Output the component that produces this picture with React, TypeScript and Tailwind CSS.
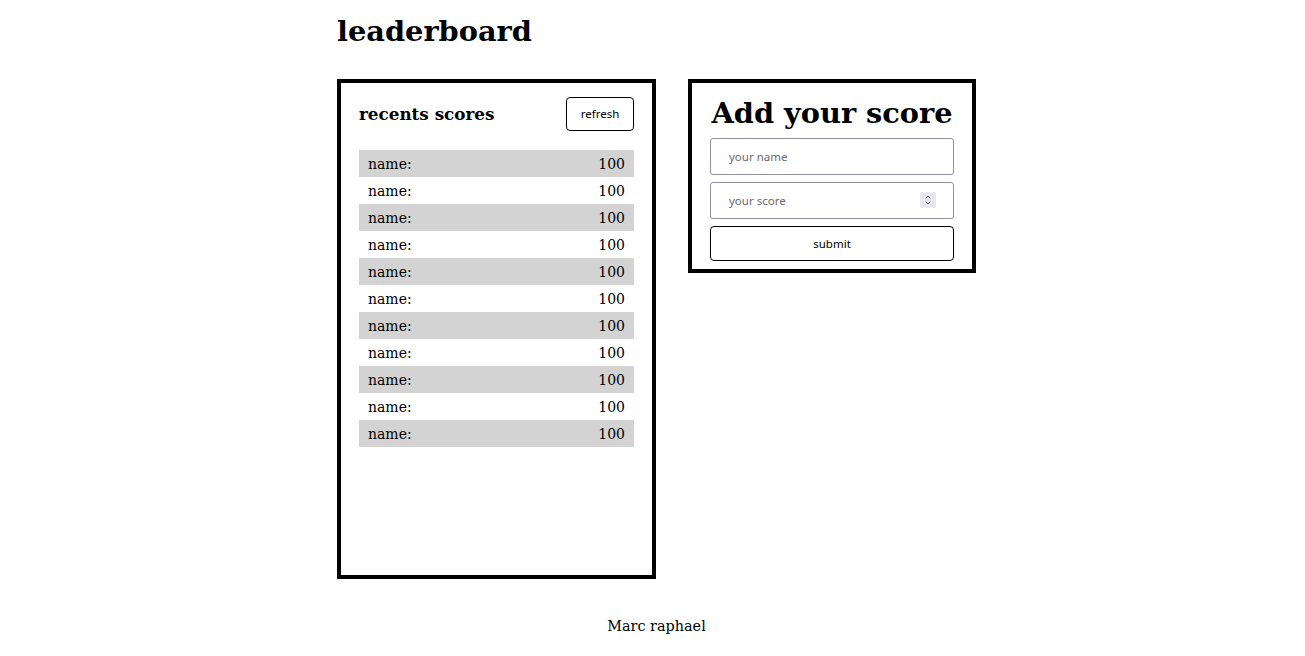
import React from 'react';

const rows = Array.from({ length: 11 }, (_, i) => ({ name: 'name:', score: 100, id: i }));

export default function App() {
  return (
    <div className="min-h-screen bg-white text-black font-['DejaVu_Serif',serif]">
      <div className="mx-auto w-[647px] pl-[8px]">
        <h1 className="pt-[15px] text-[28.8px] font-bold leading-[33px]">leaderboard</h1>

        <div className="mt-[31px] flex items-start gap-[32px]">
          {/* recent scores */}
          <div className="h-[500px] w-[319px] border-4 border-black px-[18px] pt-[14px]">
            <div className="flex items-center justify-between">
              <h3 className="pt-[2px] text-[16.8px] font-bold">recents scores</h3>
              <button className="h-[34px] w-[68px] rounded-[4px] border border-black font-['Noto_Sans',sans-serif] text-[11.5px]">
                refresh
              </button>
            </div>
            <ul className="mt-[19px]">
              {rows.map((r) => (
                <li
                  key={r.id}
                  className={`flex h-[27px] items-center justify-between px-[9px] pt-[2px] text-[14px] ${
                    r.id % 2 === 0 ? 'bg-[#d3d3d3]' : ''
                  }`}
                >
                  <span>{r.name}</span>
                  <span>{r.score}</span>
                </li>
              ))}
            </ul>
          </div>

          {/* add score */}
          <div className="w-[288px] border-4 border-black px-[18px] pt-[12px] pb-[8px]">
            <h2 className="whitespace-nowrap text-center text-[28.8px] font-bold leading-[36px]">Add your score</h2>
            <form className="mt-[7px] flex flex-col gap-[7px] font-['Noto_Sans',sans-serif] text-[11.5px]">
              <input
                className="h-[37px] w-full rounded-[3px] border border-[#8f8f9d] px-[18px] placeholder:text-[#6b6b6b] outline-none"
                placeholder="your name"
              />
              <div className="relative">
                <input
                  className="h-[37px] w-full rounded-[3px] border border-[#8f8f9d] px-[18px] placeholder:text-[#6b6b6b] outline-none"
                  placeholder="your score"
                />
                <span className="absolute right-[18px] top-[10px] flex h-[16px] w-[16px] items-center justify-center bg-[#e9e9ed]">
                  <svg width="8" height="12" viewBox="0 0 8 12" fill="none" stroke="#6b6b6b" strokeWidth="1">
                    <path d="M1.5 4.5L4 2l2.5 2.5" />
                    <path d="M1.5 7.5L4 10l2.5-2.5" />
                  </svg>
                </span>
              </div>
              <button type="button" className="h-[35px] w-full rounded-[4px] border border-black">
                submit
              </button>
            </form>
          </div>
        </div>

        <footer className="mt-[37px] text-center text-[14.4px]">Marc raphael</footer>
      </div>
    </div>
  );
}
